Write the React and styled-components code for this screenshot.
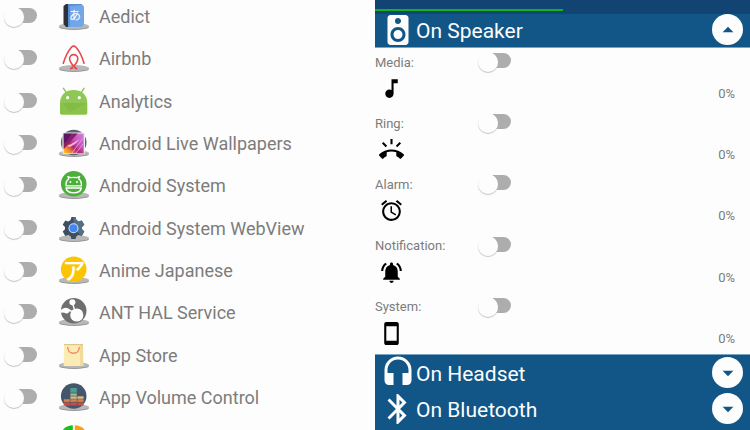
import React, { useState } from "react";
import styled, { createGlobalStyle } from "styled-components";
import {
    MdAlarm,
    MdArrowDropDown,
    MdArrowDropUp,
    MdBluetooth,
    MdHeadset,
    MdMusicNote,
    MdNotificationsActive,
    MdRingVolume,
    MdSmartphone,
    MdSpeaker,
} from "react-icons/md";

const GlobalStyle = createGlobalStyle`
    * {
        box-sizing: border-box;
    }

    body {
        margin: 0;
        overflow: hidden;
        background: #fdfdfd;
        font-family: Roboto, "Liberation Sans", sans-serif;
        color: #7c7c7c;
    }
`

const Page = styled.div`
    display: flex;
    height: 100vh;
`

const Panel = styled.section`
    display: flex;
    flex-direction: column;
    flex: 1 1 0;
    min-width: 0;
    overflow: hidden;
`

/* ---- switch ---- */

const Switch = styled.input.attrs({ type: "checkbox", role: "switch" })`
    appearance: none;
    position: relative;
    flex: none;
    width: 33px;
    height: 20px;
    margin: 0;
    cursor: pointer;

    &::before {
        content: "";
        position: absolute;
        top: 1px;
        left: 3px;
        right: 0;
        height: 15px;
        border-radius: 8px;
        background: ${(p) => (p.checked ? "#7fb0d0" : "#adadad")};
    }

    &::after {
        content: "";
        position: absolute;
        top: 0;
        left: ${(p) => (p.checked ? "13px" : "0")};
        width: 20px;
        height: 20px;
        border-radius: 50%;
        background: #fdfdfd;
        box-shadow: 0 1px 1px #c4c4c4;
    }
`

/* ---- app list ---- */

const AppList = styled.ul`
    display: flex;
    flex-direction: column;
    flex: 1;
    margin: -4px 0 0;
    padding: 0;
    list-style: none;
`

const AppRow = styled.li`
    display: flex;
    flex: 1 0 40px;
    align-items: center;
    padding-left: 4px;

    /* the last row hangs over the bottom edge */
    &:last-child {
        flex: none;
        height: 42px;
        margin-bottom: -31px;
    }
`

const AppLabel = styled.label`
    display: flex;
    align-items: center;
    gap: 9px;
    margin-left: 21px;
    font-size: 18px;
    line-height: 24px;
    white-space: nowrap;
`

const AppIcon = styled.svg.attrs({ viewBox: "0 0 32 32", "aria-hidden": true })`
    flex: none;
    width: 32px;
    height: 32px;
    overflow: visible;
`

const Glyph = styled.text`
    font-family: "Noto Sans CJK JP", sans-serif;
    fill: #fff;
    text-anchor: middle;
`

const Shadow = () => (
    <>
        <ellipse cx="16" cy="26" rx="15" ry="3" fill="#989898" />
        <ellipse cx="16" cy="25" rx="15" ry="3" fill="#b8b8b8" />
    </>
)

const Aedict = () => (
    <AppIcon>
        <Shadow />
        <path d="M8 3h6v23H8L5.5 23V5z" fill="#2b323b" />
        <path d="M10 3h13q3 1 3 4v15q0 4-4 4H10z" fill="#72a6e8" />
        <path d="M10 3h13l1 1-12 1v20l-2 1z" fill="#5b8ed0" />
        <Glyph x="17" y="19" fontSize="12">あ</Glyph>
    </AppIcon>
)

const Airbnb = () => (
    <AppIcon>
        <Shadow />
        <g fill="none" stroke="#e8484d" strokeWidth="1.6" strokeLinecap="round">
            <path d="M5.3 20.3C7.5 13 11 7 13.4 4.2Q15.7 1.9 18 4.2C20.5 7 24 13 26 20.3" />
            <path d="M13 25.5C16 23 19.8 18.5 19.8 15.7a4.1 4.1 0 0 0-8.2 0C11.6 18.5 15.4 23 18.4 25.5" />
            <path d="M12.7 25.7l1.8-.6M18.8 25.7l-1.8-.6" />
        </g>
    </AppIcon>
)

const Analytics = () => (
    <AppIcon>
        <path d="M5.5 2.3L8.3 6.6M26 2.3L23.2 6.6" stroke="#8bc34a" strokeWidth="1.3" strokeLinecap="round" />
        <path d="M2 17C2 8.5 8.2 4 15.7 4S29.3 8.5 29.3 17z" fill="#8fc754" />
        <path d="M2 17h27.3v10q0 1.7-1.7 1.7H3.7Q2 28.7 2 27z" fill="#8bc34a" />
        <path d="M4 17h24L12 26z" fill="#83bb46" />
        <circle cx="9.7" cy="11.7" r="1.6" fill="#fff" />
        <circle cx="21.3" cy="11.7" r="1.6" fill="#fff" />
    </AppIcon>
)

const Wallpapers = () => (
    <AppIcon>
        <defs>
            <linearGradient id="wall" x1="0" y1="1" x2="1" y2="0">
                <stop offset="0" stopColor="#ffd21c" />
                <stop offset=".2" stopColor="#f08a2c" />
                <stop offset=".4" stopColor="#b3246c" />
                <stop offset=".6" stopColor="#c550b8" />
                <stop offset="1" stopColor="#d780e4" />
            </linearGradient>
        </defs>
        <Shadow />
        <circle cx="15.7" cy="14.5" r="12.8" fill="#59636c" />
        <rect x="4.4" y="4.4" width="22.6" height="21.6" rx="2" fill="#eee" />
        <rect x="5.7" y="5.6" width="20" height="19.8" fill="url(#wall)" />
        <path d="M5.7 5.6h9L5.7 17z" fill="#5c1763" />
        <path d="M14.7 5.6h5L5.7 21v-4z" fill="#8b1c6b" />
        <path d="M9 18l6-3 7-4-5 5-5 3z" fill="#ffd8e8" opacity=".8" />
        <path d="M14 25l11-15M18 25l7-9" stroke="#eba4ee" strokeWidth=".8" />
    </AppIcon>
)

const AndroidSystem = () => (
    <AppIcon>
        <Shadow />
        <circle cx="15.7" cy="13.7" r="12.8" fill="#4caf3c" />
        <g fill="none" stroke="#fff" strokeWidth="1.3" strokeLinecap="round" strokeLinejoin="round">
            <path d="M8 15.8V14q0-3.3 2.8-5.2L9.8 6.5l3 1.2q2.9-.8 5.8 0l3-1.2-1 2.3q2.8 1.9 2.8 5.2v1.8z" />
            <path d="M8 18h15.4q-1 4.8-7.7 4.8T8 18z" />
        </g>
        <circle cx="12.4" cy="12" r="1" fill="#fff" />
        <circle cx="19" cy="12" r="1" fill="#fff" />
    </AppIcon>
)

const WebView = () => (
    <AppIcon>
        <Shadow />
        <path
            d="M13.4 4h4.2l.8 3.1 2.2 1.3 3.1-1 2.6 4.4-2.3 2.3v2.2l2.3 2.3-2.6 4.3-3.1-.9-2.2 1.3-.8 2.7h-4.2l-.8-2.7-2.2-1.3-3.1.9-2.6-4.3L7 16.3v-2.2l-2.3-2.3 2.6-4.4 3.1 1 2.2-1.3z"
            fill="#3f4f60"
        />
        <path d="M15.5 4h2.1l.8 3.1 2.2 1.3 3.1-1 2.6 4.4-2.3 2.3v2.2l2.3 2.3-2.6 4.3-8.2-7.9z" fill="#557086" />
        <circle cx="15.5" cy="15.2" r="5" fill="#d5e2f4" />
        <circle cx="15.5" cy="15.2" r="4" fill="#4285f4" />
    </AppIcon>
)

const AnimeJapanese = () => (
    <AppIcon>
        <Shadow />
        <circle cx="15.7" cy="14.2" r="12.8" fill="#fbc505" />
        <Glyph x="16" y="24" fontSize="23" fontWeight="500">ア</Glyph>
    </AppIcon>
)

const AntHal = () => (
    <AppIcon>
        <Shadow />
        <circle cx="15.7" cy="13.7" r="12.8" fill="#6e6e6e" />
        <path d="M14.5 6l3.5 12M4.5 14.5l8-1 6 5" stroke="#fdfdfd" strokeWidth="1.4" fill="none" />
        <circle cx="14.4" cy="5.3" r="3" fill="#fdfdfd" />
        <circle cx="18.8" cy="18" r="6.6" fill="#fdfdfd" />
        <path d="M2.8 13q5-4 9.2-.5-1 4.8-4.5 3.7-1.8-1-4.4-.4z" fill="#fdfdfd" />
    </AppIcon>
)

const AppStore = () => (
    <AppIcon>
        <Shadow />
        <path d="M6 4h19l.3 22H5.7z" fill="#fbebb4" />
        <path d="M22 5l3-1 .3 22H22z" fill="#f0dc98" />
        <path d="M6 4h19v1.2H6z" fill="#e0c489" />
        <path d="M9.7 7.5q.6 5.8 5.8 5.8t5.8-5.8" fill="none" stroke="#f0895a" strokeWidth="1.4" strokeLinecap="round" />
    </AppIcon>
)

const AppVolume = () => (
    <AppIcon>
        <Shadow />
        <circle cx="15.7" cy="14" r="12.8" fill="#44566c" />
        <path d="M12.4 6h6.4v5.4h-6.4z" fill="#4f9d8c" />
        <path d="M12.4 11.4h6.4v2.8h-6.4z" fill="#a7b487" />
        <path d="M12.4 14.2h6.4V17h-6.4zM19.4 14h6.2v3h-6.2z" fill="#e3b878" />
        <path d="M5.8 17h6v3.2h-6zM12.4 17h6.4v3.2h-6.4zM19.4 17h6.2v3.2h-6.2z" fill="#d4834e" />
        <path d="M5.8 20.2h6v3.4h-6zM12.4 20.2h6.4v3.4h-6.4zM19.4 20.2h6.2v3.4h-6.2z" fill="#c94d42" />
        <path d="M5 10.8h21M5 14.1h21M5 17h21M5 20.2h21" stroke="#44566c" strokeWidth=".5" />
    </AppIcon>
)

const SplitDisc = () => (
    <AppIcon>
        <path d="M14.8 1.2A12.8 12.8 0 0 0 14.8 26.8z" fill="#17c317" />
        <path d="M16.8 1.2A12.8 12.8 0 0 1 16.8 26.8z" fill="#f5a21b" />
    </AppIcon>
)

const apps = [
    { name: "Aedict", Icon: Aedict },
    { name: "Airbnb", Icon: Airbnb },
    { name: "Analytics", Icon: Analytics },
    { name: "Android Live Wallpapers", Icon: Wallpapers },
    { name: "Android System", Icon: AndroidSystem },
    { name: "Android System WebView", Icon: WebView },
    { name: "Anime Japanese", Icon: AnimeJapanese },
    { name: "ANT HAL Service", Icon: AntHal },
    { name: "App Store", Icon: AppStore },
    { name: "App Volume Control", Icon: AppVolume },
]

const AppItem = ({ id, name, Icon }) => {
    const [on, setOn] = useState(false)
    return (
        <AppRow>
            <Switch id={id} checked={on} onChange={() => setOn(!on)} />
            <AppLabel htmlFor={id}>
                <Icon />
                {name}
            </AppLabel>
        </AppRow>
    )
}

/* ---- volume panel ---- */

const TopStrip = styled.div`
    flex: none;
    height: 14px;
    padding-top: 9px;
    background: #124473;
`

const Progress = styled.div`
    width: 50%;
    height: 2px;
    background: #0eb51c;
`

const OutputBar = styled.header`
    display: flex;
    flex: none;
    align-items: center;
    padding: ${(p) => (p.$first ? "0 7px 2px 4px" : "2px 7px 3px 4px")};
    background: #125687;
    color: #fdfdfd;
`

const OutputIcon = styled.span`
    display: flex;
    align-items: center;
    justify-content: center;
    width: 37px;
    height: 31px;
    font-size: 36px;

    svg {
        flex: none;
    }
`

const OutputName = styled.h2`
    flex: 1;
    margin: 0;
    padding-top: 3px;
    font-size: 21px;
    font-weight: 400;
    line-height: 28px;
`

const RoundButton = styled.button`
    display: flex;
    align-items: center;
    justify-content: center;
    width: 31px;
    height: 31px;
    padding: 0;
    border: 0;
    border-radius: 50%;
    background: #fdfdfd;
    color: #125687;
    font-size: 26px;
    cursor: pointer;
`

const Streams = styled.div`
    display: grid;
    flex: 1;
    grid-auto-rows: 1fr;
    border-top: 1px solid #7ba4c2;
    border-bottom: 1px solid #7ba4c2;
`

const Stream = styled.div`
    font-size: 13px;
    line-height: 15px;
`

const StreamTop = styled.div`
    display: flex;
    align-items: center;
    height: 28px;
`

const StreamLabel = styled.label`
    width: 103px;
`

const StreamBottom = styled.div`
    display: flex;
    align-items: flex-end;
    justify-content: space-between;
    padding: 0 15px 0 4px;

    svg {
        width: 25px;
        height: 25px;
        color: #000;
    }
`

const Footer = styled.div`
    flex: none;
    padding-bottom: 3px;
    background: #125687;
`

const streams = [
    { name: "Media", Icon: MdMusicNote },
    { name: "Ring", Icon: MdRingVolume },
    { name: "Alarm", Icon: MdAlarm },
    { name: "Notification", Icon: MdNotificationsActive },
    { name: "System", Icon: MdSmartphone },
]

const Output = ({ name, Icon, open }) => (
    <OutputBar $first={open}>
        <OutputIcon>
            <Icon />
        </OutputIcon>
        <OutputName>{name}</OutputName>
        <RoundButton aria-label={name} aria-expanded={!!open}>
            {open ? <MdArrowDropUp /> : <MdArrowDropDown />}
        </RoundButton>
    </OutputBar>
)

const StreamItem = ({ name, Icon }) => {
    const [on, setOn] = useState(false)
    return (
        <Stream>
            <StreamTop>
                <StreamLabel htmlFor={name}>{name}:</StreamLabel>
                <Switch id={name} checked={on} onChange={() => setOn(!on)} />
            </StreamTop>
            <StreamBottom>
                <Icon />
                <span>0%</span>
            </StreamBottom>
        </Stream>
    )
}

const App = () => {
    return (
        <Page>
            <GlobalStyle />
            <Panel>
                <AppList>
                    {apps.map((app, i) => (
                        <AppItem key={app.name} id={`app-${i}`} {...app} />
                    ))}
                    <AppItem id="app-last" Icon={SplitDisc} />
                </AppList>
            </Panel>

            <Panel>
                <TopStrip>
                    <Progress />
                </TopStrip>
                <Output name="On Speaker" Icon={MdSpeaker} open />
                <Streams>
                    {streams.map((s) => (
                        <StreamItem key={s.name} {...s} />
                    ))}
                </Streams>
                <Footer>
                    <Output name="On Headset" Icon={MdHeadset} />
                    <Output name="On Bluetooth" Icon={MdBluetooth} />
                </Footer>
            </Panel>
        </Page>
    )
}

export default App;
